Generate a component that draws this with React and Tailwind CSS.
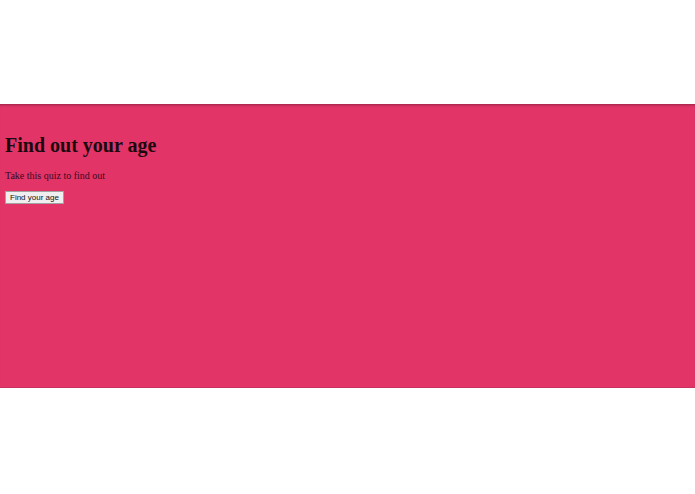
export default function App() {
  return (
    <div className="w-[695px] h-[494px] bg-white overflow-hidden" style={{ fontFamily: '"Liberation Serif", serif' }}>
      <div className="h-[104px]" />
      <div className="h-[284px] bg-[#e33468] shadow-[inset_0_3px_3px_-2px_rgba(0,0,0,0.35)] border-b border-[#c9305e] px-[5px] pt-[29px]">
        <h1 className="text-[20px] font-bold leading-[24px] text-[#1a0a0f]">Find out your age</h1>
        <p className="mt-[13px] text-[10px] leading-[12px] text-[#3a0a1c]">Take this quiz to find out</p>
        <button className="mt-[9px] h-[13px] px-[4px] text-[8px] leading-[11px] bg-[#efefef] border border-[#a0a0a0] text-[#111]" style={{ fontFamily: '"Liberation Sans", Arial, sans-serif' }}>
          Find your age
        </button>
      </div>
    </div>
  );
}
